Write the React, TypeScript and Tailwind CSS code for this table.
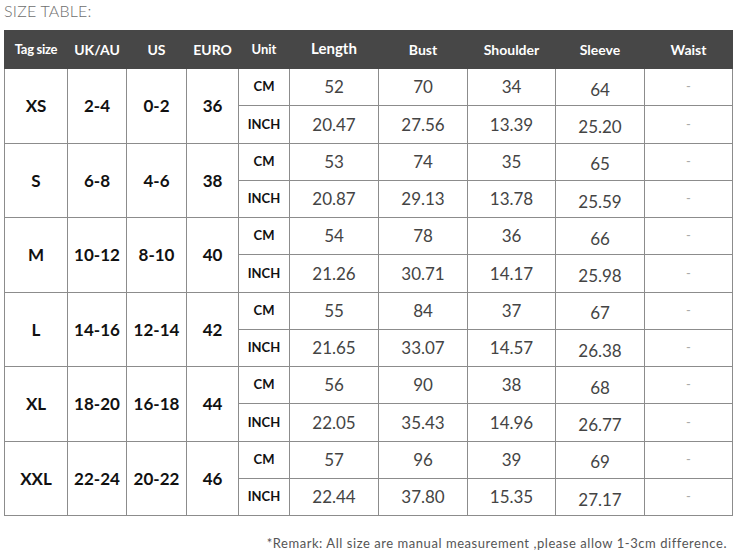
import React from 'react';

const groups = [
  { tag: 'XS', uk: '2-4', us: '0-2', euro: '36', cm: ['52', '70', '34', '64'], inch: ['20.47', '27.56', '13.39', '25.20'] },
  { tag: 'S', uk: '6-8', us: '4-6', euro: '38', cm: ['53', '74', '35', '65'], inch: ['20.87', '29.13', '13.78', '25.59'] },
  { tag: 'M', uk: '10-12', us: '8-10', euro: '40', cm: ['54', '78', '36', '66'], inch: ['21.26', '30.71', '14.17', '25.98'] },
  { tag: 'L', uk: '14-16', us: '12-14', euro: '42', cm: ['55', '84', '37', '67'], inch: ['21.65', '33.07', '14.57', '26.38'] },
  { tag: 'XL', uk: '18-20', us: '16-18', euro: '44', cm: ['56', '90', '38', '68'], inch: ['22.05', '35.43', '14.96', '26.77'] },
  { tag: 'XXL', uk: '22-24', us: '20-22', euro: '46', cm: ['57', '96', '39', '69'], inch: ['22.44', '37.80', '15.35', '27.17'] },
];

const widths = [63, 59, 60, 52, 51, 89, 89, 88, 89, 88];

const cell = 'border border-[#8c8c8c] text-center align-middle p-0';

function ValueCells({ values }: { values: string[] }) {
  return (
    <>
      {values.map((v, i) => (
        <td key={i} className={`${cell} text-[17px] text-[#444] ${i === 3 ? 'pt-[5px]' : ''}`}>
          {v}
        </td>
      ))}
      <td className={`${cell} text-[13px] text-[#aaa]`}>-</td>
    </>
  );
}

export default function App() {
  return (
    <div className="w-[735px] h-[558px] bg-white font-['Lato','Liberation_Sans',sans-serif]">
      <div className="h-[30px] pl-[4px] pt-[1px] text-[16px] font-light leading-[19px] text-[#6e6e6e] tracking-[0.2px]">
        SIZE TABLE:
      </div>

      <table className="ml-[4px] table-fixed border-collapse w-[728px]">
        <colgroup>
          {widths.map((w, i) => (
            <col key={i} style={{ width: w }} />
          ))}
        </colgroup>
        <thead>
          <tr className="h-[38px] bg-[#474747] text-white font-bold">
            <th className={`${cell} border-[#474747] text-[13px] tracking-[-0.3px]`}>Tag size</th>
            <th className={`${cell} border-[#474747] text-[14px]`}>UK/AU</th>
            <th className={`${cell} border-[#474747] text-[14px]`}>US</th>
            <th className={`${cell} border-[#474747] text-[14px]`}>EURO</th>
            <th className={`${cell} border-[#474747] text-[13px]`}>Unit</th>
            <th className={`${cell} border-[#474747] text-[15px] pb-[3px]`}>Length</th>
            <th className={`${cell} border-[#474747] text-[14px]`}>Bust</th>
            <th className={`${cell} border-[#474747] text-[14px]`}>Shoulder</th>
            <th className={`${cell} border-[#474747] text-[14px]`}>Sleeve</th>
            <th className={`${cell} border-[#474747] text-[14px]`}>Waist</th>
          </tr>
        </thead>
        <tbody>
          {groups.map((g) => (
            <React.Fragment key={g.tag}>
              <tr className="h-[37px]">
                <td rowSpan={2} className={`${cell} text-[17px] font-bold text-[#111]`}>{g.tag}</td>
                <td rowSpan={2} className={`${cell} text-[17px] font-bold text-[#111]`}>{g.uk}</td>
                <td rowSpan={2} className={`${cell} text-[17px] font-bold text-[#111]`}>{g.us}</td>
                <td rowSpan={2} className={`${cell} text-[17px] font-bold text-[#111]`}>{g.euro}</td>
                <td className={`${cell} text-[13px] font-bold text-[#111]`}>CM</td>
                <ValueCells values={g.cm} />
              </tr>
              <tr className="h-[37.5px]">
                <td className={`${cell} text-[13px] font-bold text-[#111]`}>INCH</td>
                <ValueCells values={g.inch} />
              </tr>
            </React.Fragment>
          ))}
        </tbody>
      </table>

      <div className="pr-[8px] pt-[18px] text-right text-[13px] text-[#555] tracking-[0.55px]">
        *Remark: All size are manual measurement ,please allow 1-3cm difference.
      </div>
    </div>
  );
}
